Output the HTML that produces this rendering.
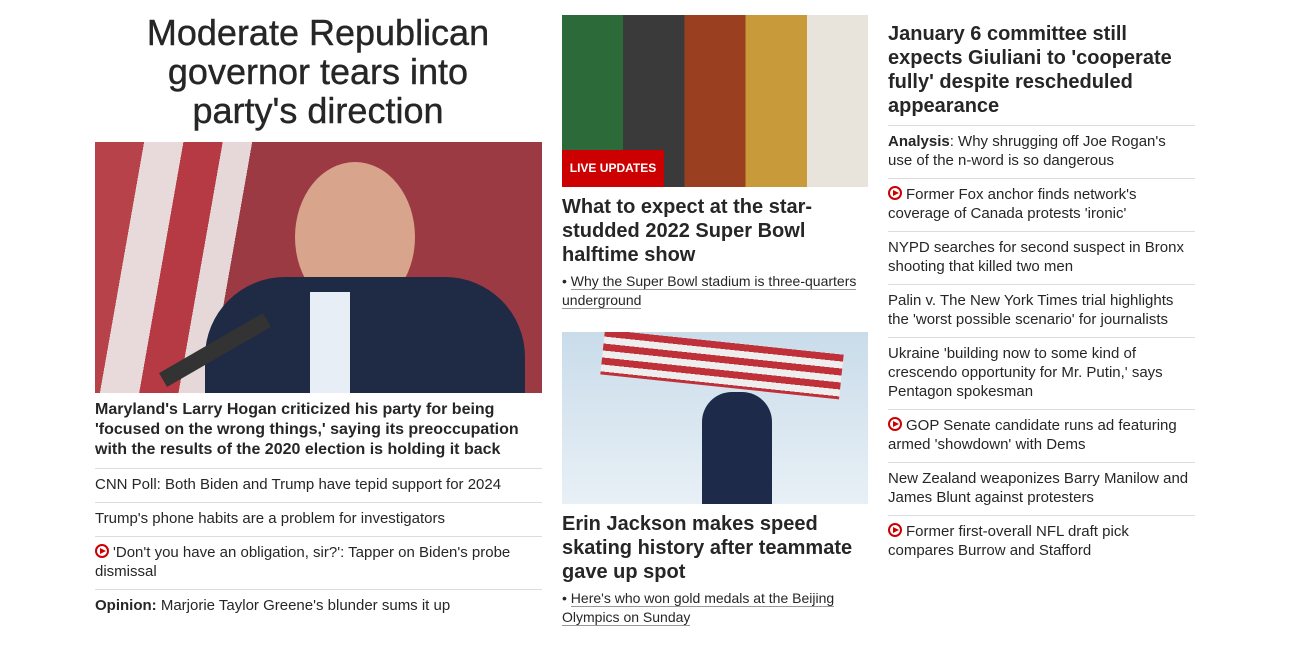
<!DOCTYPE html>
<html><head><meta charset="utf-8"><style>
*{margin:0;padding:0;box-sizing:border-box}
body{width:1290px;height:651px;background:#fff;font-family:"Liberation Sans",Arial,sans-serif;color:#262626;position:relative;overflow:hidden}
.a{position:absolute}
.h1{left:118px;top:13px;width:400px;text-align:center;font-size:36px;line-height:39px;color:#262626;-webkit-text-stroke:0.4px #262626}
.b{font-weight:bold}
.it{font-size:15px;line-height:19px}
.sep{border-top:1px solid #ddd}
.play{display:inline-block;width:14px;height:14px;border:2px solid #cc0000;border-radius:50%;position:relative;vertical-align:-1px;margin-right:4px}
.play:after{content:"";position:absolute;left:3px;top:2px;border-left:6px solid #cc0000;border-top:3px solid transparent;border-bottom:3px solid transparent}
.u{border-bottom:1px solid #999}
</style></head><body>
<div class="a h1">Moderate Republican governor tears into party's direction</div>
<div class="a" style="left:95px;top:142px;width:447px;height:251px;background:linear-gradient(100deg,#b8424a 0 10%,#e8dada 10% 18%,#b63a44 18% 26%,#e6d8d8 26% 32%,#9c3a44 32% 100%);overflow:hidden">
 <div class="a" style="left:200px;top:20px;width:120px;height:150px;border-radius:50%;background:#d9a48c"></div>
 <div class="a" style="left:110px;top:135px;width:320px;height:140px;border-radius:80px 80px 0 0;background:#1f2a44"></div>
 <div class="a" style="left:215px;top:150px;width:40px;height:101px;background:#e8eef5"></div>
 <div class="a" style="left:60px;top:200px;width:120px;height:16px;background:#333;transform:rotate(-30deg)"></div>
</div>
<div class="a b" style="left:95px;top:400px;width:450px;font-size:16px;line-height:20px">Maryland's Larry Hogan criticized his party for being 'focused on the wrong things,' saying its preoccupation with the results of the 2020 election is holding it back</div>
<div class="a sep" style="left:95px;top:468px;width:447px"></div>
<div class="a it" style="left:95px;top:475px">CNN Poll: Both Biden and Trump have tepid support for 2024</div>
<div class="a sep" style="left:95px;top:502px;width:447px"></div>
<div class="a it" style="left:95px;top:509px">Trump's phone habits are a problem for investigators</div>
<div class="a sep" style="left:95px;top:536px;width:447px"></div>
<div class="a it" style="left:95px;top:543px;width:447px"><span class="play"></span>'Don't you have an obligation, sir?': Tapper on Biden's probe dismissal</div>
<div class="a sep" style="left:95px;top:589px;width:447px"></div>
<div class="a it" style="left:95px;top:596px"><b>Opinion:</b> Marjorie Taylor Greene's blunder sums it up</div>

<div class="a" style="left:562px;top:15px;width:306px;height:172px;background:linear-gradient(90deg,#2d6a3a 0 20%,#3a3a3a 20% 40%,#9a4020 40% 60%,#c99a3a 60% 80%,#e8e4dc 80%)"></div>
<div class="a b" style="left:562px;top:150px;width:102px;height:37px;background:#cc0000;color:#fff;font-size:12px;line-height:37px;text-align:center">LIVE UPDATES</div>
<div class="a b" style="left:562px;top:195px;width:300px;font-size:20px;line-height:24px">What to expect at the star-studded 2022 Super Bowl halftime show</div>
<div class="a" style="left:562px;top:272px;width:305px;font-size:14px;line-height:19px">• <span class="u">Why the Super Bowl stadium is three-quarters</span> <span class="u">underground</span></div>
<div class="a" style="left:562px;top:332px;width:306px;height:172px;background:linear-gradient(#c9dcea,#e8f0f6);overflow:hidden">
 <div class="a" style="left:40px;top:10px;width:240px;height:45px;background:repeating-linear-gradient(#c03038 0 7px,#eee 7px 14px);transform:rotate(6deg)"></div>
 <div class="a" style="left:140px;top:60px;width:70px;height:120px;background:#1e2a4a;border-radius:30px 30px 0 0"></div>
</div>
<div class="a b" style="left:562px;top:512px;width:306px;font-size:20px;line-height:24px">Erin Jackson makes speed skating history after teammate gave up spot</div>
<div class="a" style="left:562px;top:589px;width:305px;font-size:14px;line-height:19px">• <span class="u">Here's who won gold medals at the Beijing</span> <span class="u">Olympics on Sunday</span></div>

<div class="a b" style="left:888px;top:22px;width:307px;font-size:20px;line-height:24px">January 6 committee still expects Giuliani to 'cooperate fully' despite rescheduled appearance</div>
<div class="a sep" style="left:888px;top:125px;width:307px"></div>
<div class="a it" style="left:888px;top:132px;width:285px"><b>Analysis</b>: Why shrugging off Joe Rogan's use of the n-word is so dangerous</div>
<div class="a sep" style="left:888px;top:178px;width:307px"></div>
<div class="a it" style="left:888px;top:185px;width:285px"><span class="play"></span>Former Fox anchor finds network's coverage of Canada protests 'ironic'</div>
<div class="a sep" style="left:888px;top:231px;width:307px"></div>
<div class="a it" style="left:888px;top:238px;width:300px">NYPD searches for second suspect in Bronx shooting that killed two men</div>
<div class="a sep" style="left:888px;top:284px;width:307px"></div>
<div class="a it" style="left:888px;top:291px;width:300px">Palin v. The New York Times trial highlights the 'worst possible scenario' for journalists</div>
<div class="a sep" style="left:888px;top:337px;width:307px"></div>
<div class="a it" style="left:888px;top:344px;width:285px">Ukraine 'building now to some kind of crescendo opportunity for Mr. Putin,' says Pentagon spokesman</div>
<div class="a sep" style="left:888px;top:409px;width:307px"></div>
<div class="a it" style="left:888px;top:416px;width:300px"><span class="play"></span>GOP Senate candidate runs ad featuring armed 'showdown' with Dems</div>
<div class="a sep" style="left:888px;top:462px;width:307px"></div>
<div class="a it" style="left:888px;top:469px;width:307px">New Zealand weaponizes Barry Manilow and James Blunt against protesters</div>
<div class="a sep" style="left:888px;top:515px;width:307px"></div>
<div class="a it" style="left:888px;top:522px;width:285px"><span class="play"></span>Former first-overall NFL draft pick compares Burrow and Stafford</div>
</body></html>
